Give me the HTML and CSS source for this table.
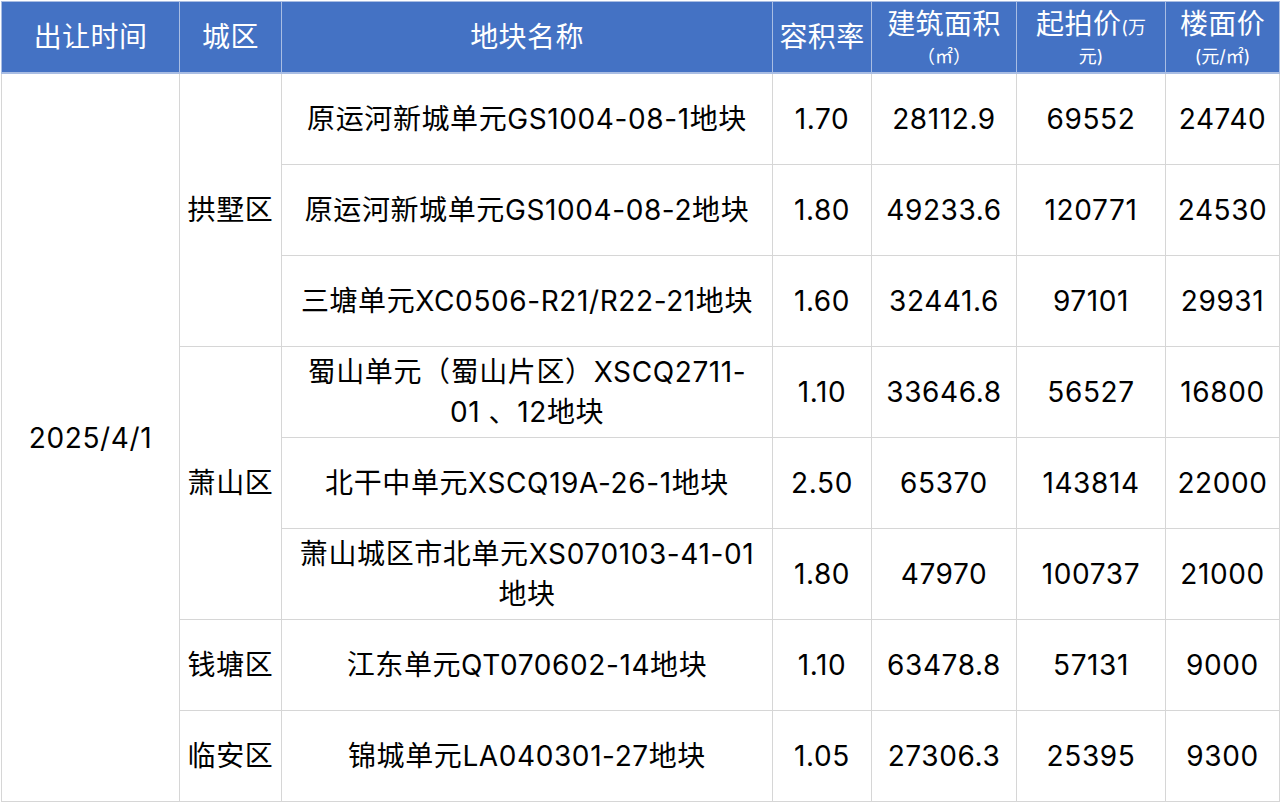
FILE: index.html
```html
<!DOCTYPE html>
<html lang="zh-CN">
<head>
<meta charset="utf-8">
<title>出让地块</title>
<link rel="stylesheet" href="styles.css">
</head>
<body>
<table class="land">
  <colgroup>
    <col class="c-date"><col class="c-area"><col class="c-name"><col class="c-far"><col class="c-size"><col class="c-start"><col class="c-unit">
  </colgroup>
  <thead>
    <tr>
      <th>出让时间</th>
      <th>城区</th>
      <th>地块名称</th>
      <th>容积率</th>
      <th class="two"><div class="main">建筑面积</div><div class="sub">（㎡）</div></th>
      <th class="two"><div class="main">起拍价<small>(万</small></div><div class="sub">元)</div></th>
      <th class="two"><div class="main">楼面价</div><div class="sub">(元/㎡)</div></th>
    </tr>
  </thead>
  <tbody>
    <tr>
      <td rowspan="8">2025/4/1</td>
      <td rowspan="3">拱墅区</td>
      <td>原运河新城单元GS1004-08-1地块</td>
      <td>1.70</td><td>28112.9</td><td>69552</td><td>24740</td>
    </tr>
    <tr>
      <td>原运河新城单元GS1004-08-2地块</td>
      <td>1.80</td><td>49233.6</td><td>120771</td><td>24530</td>
    </tr>
    <tr>
      <td>三塘单元XC0506-R21/R22-21地块</td>
      <td>1.60</td><td>32441.6</td><td>97101</td><td>29931</td>
    </tr>
    <tr>
      <td rowspan="3">萧山区</td>
      <td class="wrap">蜀山单元（蜀山片区）XSCQ2711-<br>01 、12地块</td>
      <td>1.10</td><td>33646.8</td><td>56527</td><td>16800</td>
    </tr>
    <tr>
      <td>北干中单元XSCQ19A-26-1地块</td>
      <td>2.50</td><td>65370</td><td>143814</td><td>22000</td>
    </tr>
    <tr>
      <td class="wrap">萧山城区市北单元XS070103-41-01<br>地块</td>
      <td>1.80</td><td>47970</td><td>100737</td><td>21000</td>
    </tr>
    <tr>
      <td>钱塘区</td>
      <td>江东单元QT070602-14地块</td>
      <td>1.10</td><td>63478.8</td><td>57131</td><td>9000</td>
    </tr>
    <tr>
      <td>临安区</td>
      <td>锦城单元LA040301-27地块</td>
      <td>1.05</td><td>27306.3</td><td>25395</td><td>9300</td>
    </tr>
  </tbody>
</table>
</body>
</html>
```

FILE: styles.css
```css
html, body {
  margin: 0;
  padding: 0;
  background: #ffffff;
}

body {
  padding: 1px 0 0 1px;
  font-family: Inter, "Noto Sans CJK SC", sans-serif;
  color: #000000;
}

.land {
  border-collapse: collapse;
  table-layout: fixed;
  width: 1278px;
  border: 1px solid #d6d6d6;
}

.c-date { width: 178px; }
.c-area { width: 102px; }
.c-name { width: 491px; }
.c-far { width: 99px; }
.c-size { width: 145px; }
.c-start { width: 149px; }
.c-unit { width: 114px; }

.land th {
  height: 70px;
  padding: 0;
  background: #4472c4;
  color: #ffffff;
  font-weight: 400;
  font-size: 28px;
  line-height: 34px;
  letter-spacing: 0.4px;
  text-align: center;
  vertical-align: middle;
  border: 1px solid #a9bde3;
  border-bottom: 2px solid #a9bde3;
  white-space: nowrap;
  overflow: hidden;
}

.land th.two {
  vertical-align: top;
}

.land th .main {
  height: 38px;
  padding-top: 5px;
  line-height: 34px;
  box-sizing: border-box;
}

.land th .sub {
  height: 32px;
  font-size: 18px;
  line-height: 34px;
  letter-spacing: 0;
}

.land th small {
  font-size: 18px;
  line-height: 1;
  letter-spacing: 0;
}

.land td {
  height: 90px;
  padding: 0;
  font-size: 28px;
  line-height: 40px;
  letter-spacing: 0.6px;
  text-align: center;
  vertical-align: middle;
  border: 1px solid #d6d6d6;
  white-space: nowrap;
}
```
